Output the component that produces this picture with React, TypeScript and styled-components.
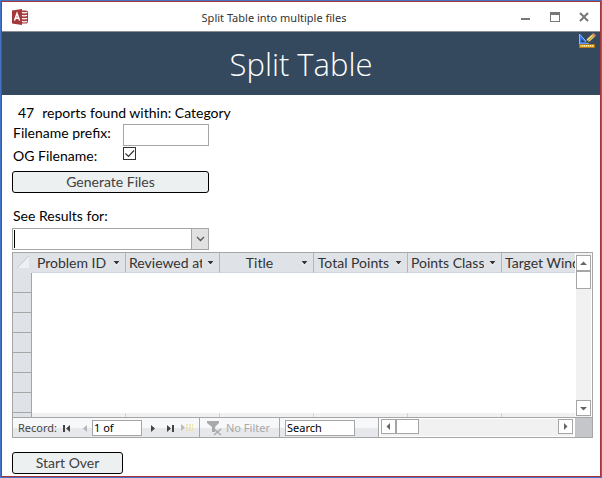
import React from "react";
import styled, { createGlobalStyle } from "styled-components";

const Global = createGlobalStyle`
  *, *::before, *::after { box-sizing: border-box; }
  body { margin: 0; background: #fff; font: 14px/18px Lato, "Noto Sans", sans-serif; color: #000; }
  button, input, select { font: inherit; color: inherit; margin: 0; padding: 0; border-radius: 0; }
`;

const Window = styled.div`
  min-height: 100vh;
  border: 1px solid #4472c4;
  display: flex;
  flex-direction: column;
`;

const Frame = styled.div`
  flex: 1;
  border: 1px solid #a4373a;
  display: flex;
  flex-direction: column;
`;

const TitleBar = styled.header`
  height: 30px;
  display: grid;
  grid-template-columns: auto 1fr auto;
  align-items: center;
  border-bottom: 1px solid #8a8f96;
  padding: 0 10px;
  font: 11px/16px "Noto Sans", sans-serif;
  color: #333;
`;

const WindowTitle = styled.span`
  text-align: center;
  padding-top: 2px;
`;

const WindowButtons = styled.div`
  display: flex;
  justify-content: flex-end;
  gap: 17px;
`;

const PlainButton = styled.button`
  border: 0;
  background: none;
  display: flex;
  align-items: center;
  justify-content: center;
`;

const Banner = styled.div`
  position: relative;
  height: 63px;
  background: #34495e;
  display: flex;
  align-items: center;
  justify-content: center;
`;

const Heading = styled.h1`
  margin: 0;
  font: 300 31px/44px "Open Sans", sans-serif;
  color: #fff;
`;

const DesignIcon = styled.svg`
  position: absolute;
  top: 1px;
  right: 4px;
`;

const Form = styled.main`
  padding: 8px 7px 2px 10px;
  display: flex;
  flex-direction: column;
  align-items: flex-start;
`;

const Summary = styled.p`
  margin: 0;
  padding-left: 6px;
  height: 21px;
  line-height: 20px;
  display: flex;
  gap: 8px;
`;

const Field = styled.div`
  display: grid;
  grid-template-columns: 111px 86px;
  height: 23px;
`;

const Label = styled.label`
  padding-left: 1px;
`;

const TextInput = styled.input`
  width: 100%;
  height: 22px;
  border: 1px solid #a6a6a6;
  background: #fff;
  padding: 0 3px;
`;

const CheckBox = styled.input`
  appearance: none;
  width: 13px;
  height: 13px;
  border: 1px solid #333;
  background: #fff;
  display: grid;
  &:checked {
    background: url("data:image/svg+xml,%3Csvg xmlns='http://www.w3.org/2000/svg' viewBox='0 0 11 11'%3E%3Cpath d='M1.5 5.5l3 3 5.500-6' fill='none' stroke='%23333' stroke-width='1.200'/%3E%3C/svg%3E");
  }
`;

const CommandButton = styled.button<{ $width: number }>`
  width: ${(p) => p.$width}px;
  height: 22px;
  border: 1px solid #000;
  border-radius: 3px;
  background: #ecf0f1;
  color: #404040;
`;

const Actions = styled.div`
  padding-top: 1px;
`;

const ResultsLabel = styled.label`
  margin-top: 14px;
  padding-left: 1px;
  height: 21px;
`;

const Combo = styled.div`
  display: grid;
  grid-template-columns: 197px;
  margin-bottom: 2px;
  & > * { grid-area: 1 / 1; }
`;

const Select = styled.select`
  appearance: none;
  height: 22px;
  border: 1px solid #a6a6a6;
  background: linear-gradient(#000, #000) 1px 1px / 1px 18px no-repeat #fff;
  outline: none;
`;

const ComboArrow = styled.span`
  justify-self: end;
  width: 18px;
  height: 22px;
  border: 1px solid #a6a6a6;
  background: #e1e1e1;
  pointer-events: none;
  display: flex;
  align-items: center;
  justify-content: center;
`;

const DataSheet = styled.section`
  width: 100%;
  border: 1px solid #a6a6a6;
  margin-bottom: 14px;
`;

const SheetBody = styled.div`
  display: grid;
  grid-template-columns: minmax(0, 1fr) 17px;
`;

const Viewport = styled.div`
  overflow: hidden;
`;

const Table = styled.table`
  table-layout: fixed;
  border-collapse: separate;
  border-spacing: 0;
  width: 583px;
`;

const ColumnHead = styled.th`
  height: 20px;
  padding: 0;
  background: #dfe2e7;
  border-right: 1px solid #b1b5bf;
  border-bottom: 1px solid #d0d5e4;
  font-weight: 400;
  color: #333;
`;

const HeadInner = styled.div`
  display: flex;
  align-items: center;
  gap: 4px;
  height: 19px;
  padding: 0 4px 0 3px;
`;

const HeadText = styled.span`
  flex: 1;
  overflow: hidden;
  white-space: nowrap;
`;

const Corner = styled.th`
  width: 19px;
  padding: 0;
  background: #dfe2e7;
`;

const RowHead = styled.th`
  height: 20px;
  padding: 0;
  background: #dfe2e7;
  border-right: 1px solid #a6a6a6;
  border-bottom: 1px solid #a6a6a6;
`;

const Cell = styled.td`
  padding: 0;
  background: #fff;
`;

const PartialHead = styled.th`
  height: 4px;
  padding: 0;
  background: #dfe2e7;
  border-right: 1px solid #a6a6a6;
`;

const PartialCell = styled.td`
  padding: 0;
  background: #f1f1f3;
  border-right: 1px solid #d0d3e0;
`;

const VerticalBar = styled.div`
  display: flex;
  flex-direction: column;
  background: #f1f1f1;
  border-left: 1px solid #fff;
  border-right: 1px solid #fff;
  padding: 2px 0 1px;
`;

const HorizontalBar = styled.div`
  flex: 1;
  display: flex;
  background: #f1f1f1;
  border: 1px solid #fff;
  border-width: 1px 2px;
`;

const ScrollButton = styled.button`
  width: 15px;
  height: 15px;
  flex: none;
  border: 1px solid #a6a6a6;
  background: #fff;
  display: flex;
  align-items: center;
  justify-content: center;
`;

const UpDownButton = styled(ScrollButton)`
  height: 16px;
`;

const Thumb = styled.div<{ $vertical?: boolean }>`
  ${(p) => (p.$vertical ? "height: 18px;" : "width: 23px; height: 15px;")}
  border: 1px solid #a6a6a6;
  background: #fff;
`;

const Track = styled.div`
  flex: 1;
`;

const NavBar = styled.div`
  display: flex;
  height: 20px;
  border-top: 1px solid #a6a6a6;
  background: linear-gradient(#f7f8fa 50%, #e6e8ec 50%);
  font: 11px/16px "Noto Sans", sans-serif;
  color: #444;
`;

const NavGroup = styled.div<{ $width: number }>`
  width: ${(p) => p.$width}px;
  flex: none;
  display: flex;
  align-items: center;
  border-right: 1px solid #a6a6a6;
  padding-left: 5px;
  white-space: nowrap;
`;

const NavLabel = styled.label`
  width: 38px;
`;

const NavInput = styled.input<{ $width: number }>`
  width: ${(p) => p.$width}px;
  height: 16px;
  border: 1px solid #a6a6a6;
  background: #fff;
  color: #000;
  padding: 0 1px;
`;

const NavButton = styled(PlainButton)<{ $width: number }>`
  width: ${(p) => p.$width}px;
  height: 16px;
`;

const FilterButton = styled(PlainButton)`
  gap: 3px;
  color: #a9a9a9;
`;

const SizeCorner = styled.div`
  width: 17px;
  background: #c5c6ca;
`;

const columns = ["Problem ID", "Reviewed at", "Title", "Total Points", "Points Class", "Target Window"];
const rows = [1, 2, 3, 4, 5, 6, 7];

function Arrow({ d }: { d: string }) {
  return (
    <svg width="9" height="9" viewBox="0 0 9 9" fill="#666">
      <path d={d} />
    </svg>
  );
}

function AccessLogo() {
  return (
    <svg width="16" height="16" viewBox="0 0 16 16" aria-label="Access">
      <path d="M0 1.500L10 0v16L0 14.500z" fill="#a4373a" />
      <path d="M10 1.500h3.500c1.500 0 2.500.8 2.500 1.800v9.400c0 1-1 1.800-2.500 1.800H10" fill="#a4373a" />
      <path d="M10 3.300c2 .7 4 .7 5 0M10 6.300c2 .7 4 .7 5 0M10 9.300c2 .7 4 .7 5 0M10 12.300c2 .7 4 .7 5 0" stroke="#fff" strokeWidth="1.300" fill="none" />
      <path d="M2.500 11.500L5 4.500l2.600 7M3.400 9.300h3.300" stroke="#fff" strokeWidth="1.500" fill="none" />
    </svg>
  );
}

function Design() {
  return (
    <DesignIcon width="18" height="16" viewBox="0 0 18 16" aria-hidden="true">
      <path d="M1.500 1v10h9z" fill="#3c78e8" stroke="#8ab8ff" />
      <path d="M3.500 6v3h3z" fill="#24384e" />
      <path d="M8 10l1-4 6-5.500 2.500 2.500-6 5.500z" fill="#f0d878" />
      <path d="M10 8l6-5.500" stroke="#a88838" />
      <path d="M14 1.500L15.500 0 18 2.300 16.500 4z" fill="#d0806a" />
      <path d="M8 10l.8-3 2 2z" fill="#222" />
      <path d="M1.500 11.500h15v3h-15z" fill="#f0b030" stroke="#b87810" />
      <path d="M4.500 12v1.500m2-1.500v1.500m2-1.500v1.500m2-1.500v1.500m2-1.500v1.500m2-1.500v1.500" stroke="#fff4b0" />
    </DesignIcon>
  );
}

export default function App() {
  return (
    <Window>
      <Global />
      <Frame>
        <TitleBar>
          <AccessLogo />
          <WindowTitle>Split Table into multiple files</WindowTitle>
          <WindowButtons>
            <PlainButton aria-label="Minimize">
              <svg width="12" height="12"><path d="M1 7h9v2H1z" fill="#777" /></svg>
            </PlainButton>
            <PlainButton aria-label="Maximize">
              <svg width="12" height="12"><path d="M1 1h10v10H1zM2 4v6h8V4z" fill="#777" fillRule="evenodd" /></svg>
            </PlainButton>
            <PlainButton aria-label="Close">
              <svg width="12" height="12"><path d="M2 2l8 8M10 2l-8 8" stroke="#777" strokeWidth="2" /></svg>
            </PlainButton>
          </WindowButtons>
        </TitleBar>
        <Banner>
          <Heading>Split Table</Heading>
          <Design />
        </Banner>
        <Form>
          <Summary><span>47</span><span>reports found within: Category</span></Summary>
          <Field>
            <Label htmlFor="prefix">Filename prefix:</Label>
            <TextInput id="prefix" />
          </Field>
          <Field>
            <Label htmlFor="og">OG Filename:</Label>
            <CheckBox id="og" type="checkbox" defaultChecked />
          </Field>
          <Actions>
            <CommandButton $width={197}>Generate Files</CommandButton>
          </Actions>
          <ResultsLabel htmlFor="results">See Results for:</ResultsLabel>
          <Combo>
            <Select id="results"><option></option></Select>
            <ComboArrow>
              <svg width="9" height="6"><path d="M1 1l3.500 3.500L8 1" stroke="#555" strokeWidth="1.300" fill="none" /></svg>
            </ComboArrow>
          </Combo>
          <DataSheet>
            <SheetBody>
              <Viewport>
                <Table>
                  <colgroup>
                    <col width="19" />
                    {columns.map((c) => <col key={c} width="94" />)}
                  </colgroup>
                  <thead>
                    <tr>
                      <Corner>
                        <svg width="12" height="12"><path d="M12 0v12H0z" fill="#edf1f6" /><path d="M12 0L0 12" stroke="#c3ccd6" /></svg>
                      </Corner>
                      {columns.map((c) => (
                        <ColumnHead key={c}>
                          <HeadInner>
                            <HeadText>{c}</HeadText>
                            <svg width="9" height="9"><path d="M1 3h7L4.500 8z" fill="#fff" /><path d="M1.500 3h6L4.500 6.500z" fill="#333" /></svg>
                          </HeadInner>
                        </ColumnHead>
                      ))}
                    </tr>
                  </thead>
                  <tbody>
                    {rows.map((r) => <tr key={r}><RowHead /><Cell colSpan={6} /></tr>)}
                    <tr><PartialHead />{columns.map((c) => <PartialCell key={c} />)}</tr>
                  </tbody>
                </Table>
              </Viewport>
              <VerticalBar>
                <UpDownButton aria-label="Scroll up"><Arrow d="M1 6h7L4.500 2.500z" /></UpDownButton>
                <Thumb $vertical />
                <Track />
                <UpDownButton aria-label="Scroll down"><Arrow d="M1 3h7L4.500 6.500z" /></UpDownButton>
              </VerticalBar>
            </SheetBody>
            <NavBar>
              <NavGroup $width={187}>
                <NavLabel htmlFor="record">Record:</NavLabel>
                <NavButton $width={22} aria-label="First record"><svg width="8" height="8"><path d="M0 1h2v7H0zM7 1v7L3 4.500z" fill="#444" /></svg></NavButton>
                <NavButton $width={14} aria-label="Previous record"><svg width="6" height="8"><path d="M5 1v7L1 4.500z" fill="#b5b5b5" /></svg></NavButton>
                <NavInput id="record" $width={50} defaultValue="1 of" />
                <NavButton $width={22} aria-label="Next record"><svg width="6" height="8"><path d="M1 1v7l4-3.500z" fill="#444" /></svg></NavButton>
                <NavButton $width={12} aria-label="Last record"><svg width="8" height="8"><path d="M1 1v7l4-3.500zM6 1h2v7H6z" fill="#444" /></svg></NavButton>
                <NavButton $width={22} aria-label="New record">
                  <svg width="14" height="9"><path d="M1 1v7l4-3.500z" fill="#bbb" /><path d="M6 2h7M6 4.500h7M6 7h7" stroke="#eddf9c" strokeDasharray="2 1" strokeWidth="1.500" /></svg>
                </NavButton>
              </NavGroup>
              <NavGroup $width={80}>
                <FilterButton>
                  <svg width="18" height="16"><path d="M2 1h12v2l-4 4v5H7V7L2 3z" fill="#a9a9a9" /><path d="M9 9l7 6M16 9l-7 6" stroke="#a9a9a9" strokeWidth="1.500" /></svg>
                  No Filter
                </FilterButton>
              </NavGroup>
              <NavGroup $width={99}>
                <NavInput aria-label="Search" $width={70} defaultValue="Search" />
              </NavGroup>
              <HorizontalBar>
                <ScrollButton aria-label="Scroll left"><Arrow d="M6 1v7L2.500 4.500z" /></ScrollButton>
                <Thumb />
                <Track />
                <ScrollButton aria-label="Scroll right"><Arrow d="M3 1v7l3.500-3.500z" /></ScrollButton>
              </HorizontalBar>
              <SizeCorner />
            </NavBar>
          </DataSheet>
          <CommandButton $width={111}>Start Over</CommandButton>
        </Form>
      </Frame>
    </Window>
  );
}
